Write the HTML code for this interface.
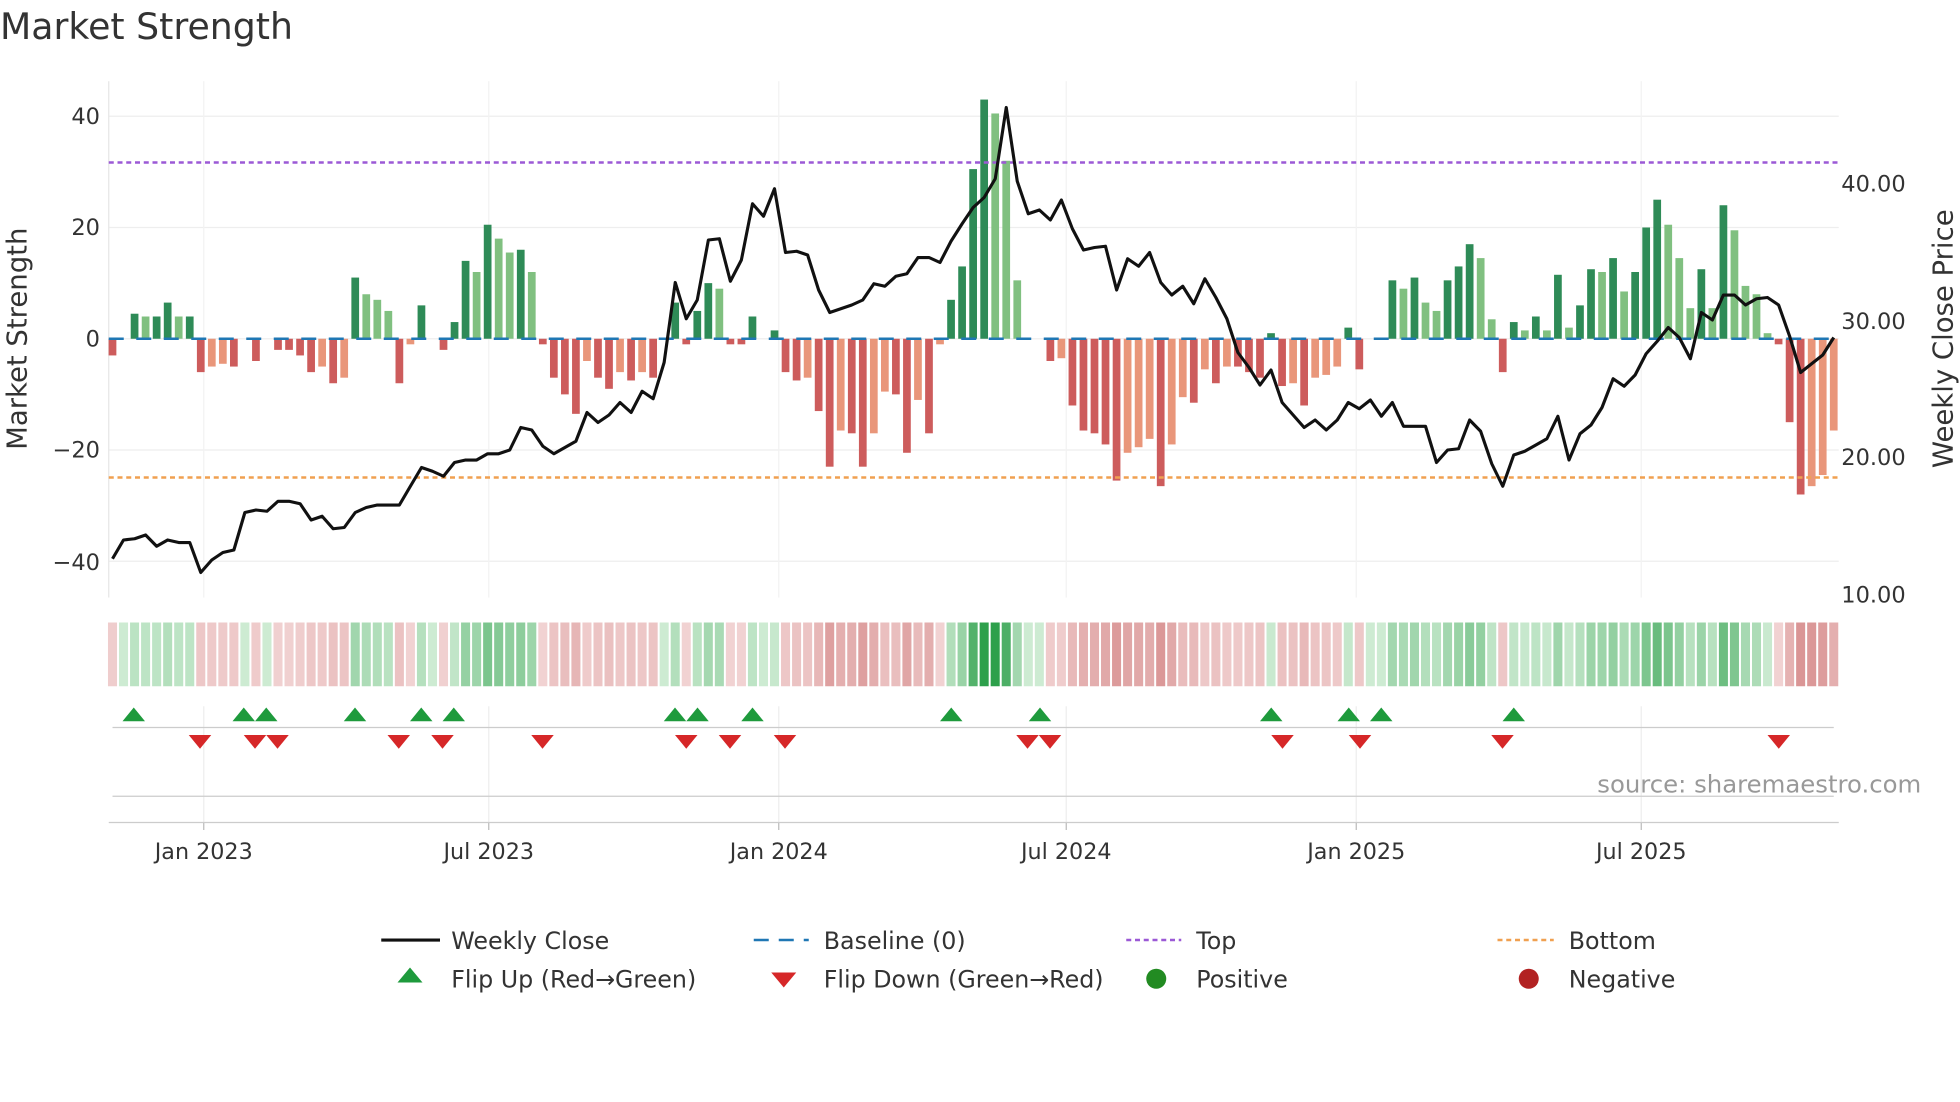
<!DOCTYPE html>
<html><head><meta charset="utf-8"><style>
html,body{margin:0;padding:0;background:#fff;width:1960px;height:1102px;overflow:hidden}
svg{display:block}
text{font-family:"DejaVu Sans","Liberation Sans",sans-serif}
</style></head><body>
<svg id="s" width="1960" height="1102" viewBox="0 0 1568 881.6" xmlns="http://www.w3.org/2000/svg">
<text x="0" y="31" font-size="29" fill="#333">Market Strength</text>
<g id="g"></g>
<text transform="translate(21,271) rotate(-90)" text-anchor="middle" font-size="22" fill="#333">Market Strength</text>
<text transform="translate(1562,271) rotate(-90)" text-anchor="middle" font-size="22" fill="#333">Weekly Close Price</text>
<g font-size="18" fill="#333" text-anchor="end">
<text x="80" y="99">40</text><text x="80" y="188">20</text><text x="80" y="277">0</text>
<text x="80" y="366">−20</text><text x="80" y="456">−40</text>
</g>
<g font-size="18" fill="#333">
<text x="1473" y="153">40.00</text><text x="1473" y="263">30.00</text>
<text x="1473" y="372">20.00</text><text x="1473" y="482">10.00</text>
</g>
<g font-size="17.8" fill="#333" text-anchor="middle">
<text x="163" y="687">Jan 2023</text><text x="391" y="687">Jul 2023</text>
<text x="623" y="687">Jan 2024</text><text x="853" y="687">Jul 2024</text>
<text x="1085" y="687">Jan 2025</text><text x="1313" y="687">Jul 2025</text>
</g>
<text x="1537" y="634" font-size="19.5" fill="#999" text-anchor="end">source: sharemaestro.com</text>
<g font-size="19" fill="#333">
<line x1="305" y1="752" x2="352" y2="752" stroke="#111" stroke-width="2.5"/>
<text x="361" y="759">Weekly Close</text>
<line x1="603" y1="752" x2="647" y2="752" stroke="#1f77b4" stroke-width="2" stroke-dasharray="12,8"/>
<text x="659" y="759">Baseline (0)</text>
<line x1="901" y1="752" x2="945" y2="752" stroke="#9b59d6" stroke-width="2" stroke-dasharray="4,3"/>
<text x="957" y="759">Top</text>
<line x1="1198" y1="752" x2="1243" y2="752" stroke="#f0a050" stroke-width="2" stroke-dasharray="4,3"/>
<text x="1255" y="759">Bottom</text>
<path d="M328 774 l10 12 h-20z" fill="#1e9a3c"/>
<text x="361" y="790">Flip Up (Red→Green)</text>
<path d="M627 790 l10 -12 h-20z" fill="#d62728"/>
<text x="659" y="790">Flip Down (Green→Red)</text>
<circle cx="925" cy="783" r="8" fill="#228b22"/>
<text x="957" y="790">Positive</text>
<circle cx="1223" cy="783" r="8" fill="#b22222"/>
<text x="1255" y="790">Negative</text>
</g>
</svg>
<script>
var V=[-3,0,4.5,4,4,6.5,4,4,-6,-5,-4.5,-5,0,-4,0,-2,-2,-3,-6,-5,-8,-7,11,8,7,5,-8,-1,6,0,-2,3,14,12,20.5,18,15.5,16,12,-1,-7,-10,-13.5,-4,-7,-9,-6,-7.5,-6,-7,0,6.5,-1,5,10,9,-1,-1,4,0,1.5,-6,-7.5,-7,-13,-23,-16.5,-17,-23,-17,-9.5,-10,-20.5,-11,-17,-1,7,13,30.5,43,40.5,32,10.5,0,0,-4,-3.5,-12,-16.5,-17,-19,-25.5,-20.5,-19.5,-18,-26.5,-19,-10.5,-11.5,-5.5,-8,-5,-5,-6,-7,1,-8.5,-8,-12,-7,-6.5,-5,2,-5.5,0,0,10.5,9,11,6.5,5,10.5,13,17,14.5,3.5,-6,3,1.5,4,1.5,11.5,2,6,12.5,12,14.5,8.5,12,20,25,20.5,14.5,5.5,12.5,5.5,24,19.5,9.5,8,1,-1,-15,-28,-26.5,-24.5,-16.5];
var P=[447,432,431,428,437,432,434,434,458,448,442,440,410,408,409,401,401,403,416,413,423,422,410,406,404,404,404,389,374,377,381,370,368,368,363,363,360,342,344,357,363,358,353,330,338,332,322,330,313,319,290,226,255,240,192,191,225,208,163,173,151,202,201,204,232,250,247,244,240,227,229,221,219,206,206,210,193,179,166,158,143,86,145,171,168,176,160,183,200,198,197,232,207,213,202,226,236,229,243,223,238,255,282,294,308,296,322,332,342,336,344,336,322,327,320,333,322,341,341,341,370,360,359,336,345,371,389,364,361,356,351,333,368,347,340,326,303,309,300,283,273,262,270,287,250,256,236,236,244,239,238,244,269,298,291,284,270];
var n=V.length,x0=90,x1=1467,st=(x1-x0)/(n-1),Y=function(v){return 271-v*4.45};
var h='';
[40,20,0,-20,-40].forEach(function(v){h+='<line x1="87" x2="1471" y1="'+Y(v)+'" y2="'+Y(v)+'" stroke="#eee" stroke-width="1"/>'});
[163,391,623,853,1085,1313].forEach(function(x){h+='<line x1="'+x+'" x2="'+x+'" y1="65" y2="478" stroke="#f2f2f2"/><line x1="'+x+'" x2="'+x+'" y1="565" y2="658" stroke="#eee"/><line x1="'+x+'" x2="'+x+'" y1="658" y2="664" stroke="#bbb"/>'});
h+='<line x1="87" x2="87" y1="65" y2="478" stroke="#e6e6e6"/>';
h+='<line x1="90" x2="1467" y1="582" y2="582" stroke="#ccc"/><line x1="90" x2="1467" y1="637" y2="637" stroke="#ccc"/><line x1="87" x2="1471" y1="658" y2="658" stroke="#ccc"/>';
var bw=st*0.7;
for(var i=0;i<n;i++){var v=V[i],p=i?V[i-1]:0,x=x0+i*st,c;
 if(v>=0)c=(v>=p?'#2e8b57':'#80c080');else c=(v<=p?'#cd5c5c':'#e9967a');
 var y=Y(Math.max(v,0)),hh=Math.abs(v)*4.45;
 if(Math.abs(v)>0.3)h+='<rect x="'+(x-bw/2)+'" y="'+y+'" width="'+bw+'" height="'+hh+'" fill="'+c+'"/>';
 var a=Math.min(Math.abs(v)/40,1),col;
 if(v>=0){var r=Math.round(205-a*160),g=Math.round(235-a*75),b=Math.round(210-a*135);col='rgb('+r+','+g+','+b+')';}
 else{var r=Math.round(242-a*35),g=Math.round(212-a*90),b=Math.round(212-a*90);col='rgb('+r+','+g+','+b+')';}
 h+='<rect x="'+(x-st/2+0.8)+'" y="498" width="'+(st-1.6)+'" height="51" fill="'+col+'"/>';
}
h+='<line x1="87" x2="1471" y1="271" y2="271" stroke="#1f77b4" stroke-width="2" stroke-dasharray="12,10"/>';
h+='<line x1="87" x2="1471" y1="130" y2="130" stroke="#9b59d6" stroke-width="2" stroke-dasharray="4,3"/>';
h+='<line x1="87" x2="1471" y1="382" y2="382" stroke="#f0a050" stroke-width="2" stroke-dasharray="4,3"/>';
var d='';for(var i=0;i<n;i++)d+=(i?'L':'M')+(x0+i*st).toFixed(1)+' '+P[i];
h+='<path d="'+d+'" fill="none" stroke="#111" stroke-width="2.5" stroke-linejoin="round"/>';
[107,195,213,284,337,363,540,558,602,761,832,1017,1079,1105,1211].forEach(function(x){h+='<path d="M'+x+' 566 l9 11 h-18z" fill="#1e9a3c"/>'});
[160,204,222,319,354,434,549,584,628,822,840,1026,1088,1202,1423].forEach(function(x){h+='<path d="M'+x+' 599 l9 -11 h-18z" fill="#d62728"/>'});
document.getElementById('g').innerHTML=h;
</script>
</body></html>
